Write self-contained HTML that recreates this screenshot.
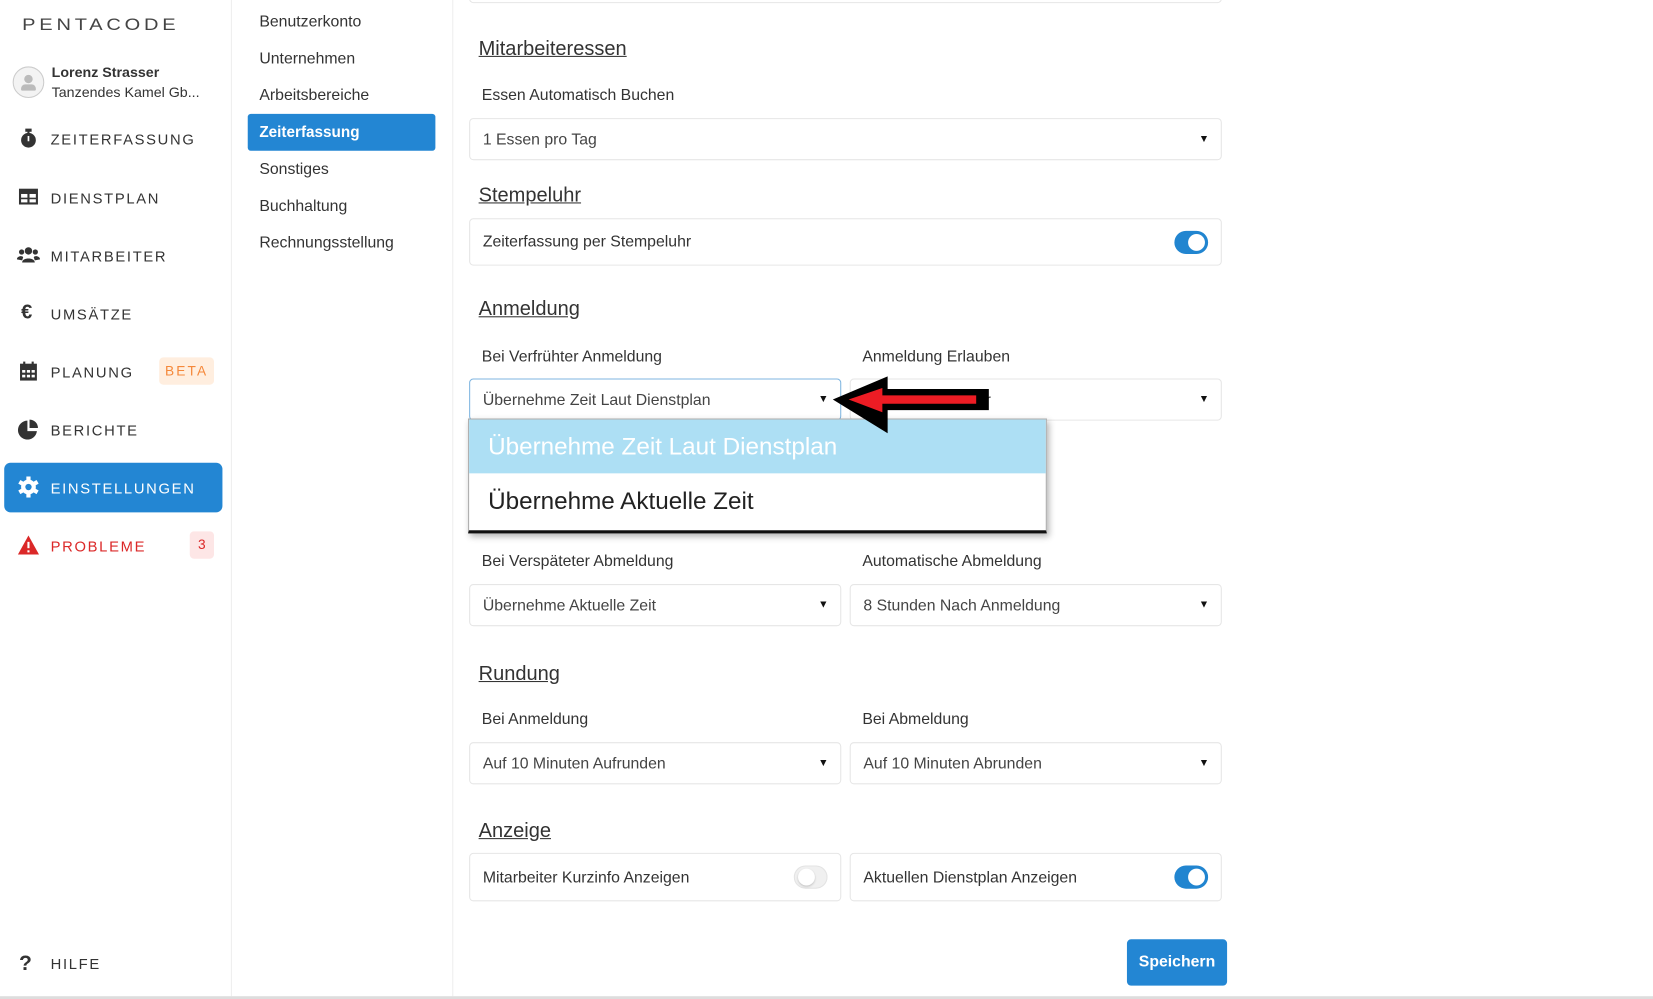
<!DOCTYPE html>
<html><head><meta charset="utf-8"><style>
*{box-sizing:border-box;margin:0;padding:0}
html,body{width:1653px;height:999px;overflow:hidden;background:#fff}
#w{position:absolute;left:0;top:0;width:1568px;height:948px;transform:scale(1.0542);transform-origin:0 0;font-family:"Liberation Sans",sans-serif;color:#333}
.a{position:absolute}
.nav{position:absolute;left:48px;font-size:14px;letter-spacing:1.6px;color:#333;line-height:20px;top:1px}
.ic{position:absolute;left:16px;width:22px;height:20px}
.sub{position:absolute;left:246px;font-size:15px;color:#333;line-height:20px}
.h{position:absolute;left:454px;font-size:19px;text-decoration:underline;color:#333;line-height:24px}
.lb{position:absolute;font-size:15px;color:#333;line-height:20px}
.box{position:absolute;border:1px solid #e6e6e6;border-radius:4px;background:#fff;font-size:15px;color:#444;padding-left:12px;display:flex;align-items:center}
.car{position:absolute;right:11px;top:50%;transform:translateY(-50%);font-size:10px;color:#111}
.tg{position:absolute;width:32px;height:22px;border-radius:11px;background:#2185d0;right:12px;top:50%;transform:translateY(-50%)}
.tg:after{content:"";position:absolute;right:3px;top:3px;width:16px;height:16px;border-radius:50%;background:#fff}
.tg.off{background:#f0f0f0;border:1px solid #e3e3e3}
.tg.off:after{left:3px;right:auto;top:2px;box-shadow:0 1px 2px rgba(0,0,0,.2)}
</style></head><body><div id="w">
<div class="a" style="left:219px;top:0;width:1px;height:945px;background:#eee"></div>
<div class="a" style="left:429px;top:0;width:1px;height:945px;background:#eee"></div>
<div class="a" style="left:0;top:945px;width:1568px;height:3px;background:#ddd"></div>

<div class="a" style="left:21px;top:13px;font-size:19px;letter-spacing:3.6px;color:#444;line-height:22px;transform:scaleY(0.85);transform-origin:0 50%">PENTACODE</div>

<div class="a" style="left:12px;top:63px;width:30px;height:30px;border-radius:50%;border:1px solid #ccc;background:#f3f3f3"><div class="a" style="left:10px;top:7px;width:8px;height:8px;border-radius:50%;background:#bbb"></div><div class="a" style="left:7px;top:16px;width:14px;height:6px;border-radius:4px 4px 1px 1px;background:#bbb"></div></div>
<div class="a" style="left:49px;top:61px;font-size:13.5px;font-weight:bold;color:#333">Lorenz Strasser</div>
<div class="a" style="left:49px;top:80px;font-size:13.5px;color:#333">Tanzendes Kamel Gb...</div>

<svg class="ic" style="top:121px" viewBox="0 0 22 20"><circle cx="11" cy="12" r="7" fill="#333"/><rect x="8" y="1" width="6" height="3" fill="#333"/><rect x="10" y="3" width="2" height="3" fill="#333"/><rect x="10.2" y="8" width="1.6" height="5" fill="#fff"/></svg>
<div class="nav" style="top:122px">ZEITERFASSUNG</div>
<svg class="ic" style="top:177px" viewBox="0 0 22 20"><rect x="2" y="2" width="18" height="15" fill="#333"/><rect x="4" y="7" width="6" height="3.5" fill="#fff"/><rect x="12" y="7" width="6" height="3.5" fill="#fff"/><rect x="4" y="12" width="6" height="3" fill="#fff"/><rect x="12" y="12" width="6" height="3" fill="#fff"/></svg>
<div class="nav" style="top:178px">DIENSTPLAN</div>
<svg class="ic" style="top:232px" viewBox="0 0 22 20"><circle cx="11" cy="6" r="3.5" fill="#333"/><circle cx="4.5" cy="7" r="2.5" fill="#333"/><circle cx="17.5" cy="7" r="2.5" fill="#333"/><path d="M5 17c0-5 12-5 12 0z M0 14c0-3 5-4 6-2l-1 3z M22 14c0-3-5-4-6-2l1 3z" fill="#333"/></svg>
<div class="nav" style="top:233px">MITARBEITER</div>
<div class="a" style="left:20px;top:286px;font-size:19px;font-weight:bold;color:#333">€</div>
<div class="nav" style="top:288px">UMSÄTZE</div>
<svg class="ic" style="top:342px" viewBox="0 0 22 20"><rect x="3" y="3" width="16" height="16" fill="#333"/><rect x="6" y="1" width="2" height="4" fill="#333"/><rect x="14" y="1" width="2" height="4" fill="#333"/><g fill="#fff"><rect x="5" y="9" width="3" height="2.5"/><rect x="9.5" y="9" width="3" height="2.5"/><rect x="14" y="9" width="3" height="2.5"/><rect x="5" y="13.5" width="3" height="2.5"/><rect x="9.5" y="13.5" width="3" height="2.5"/><rect x="14" y="13.5" width="3" height="2.5"/></g></svg>
<div class="nav" style="top:343px">PLANUNG</div>
<div class="a" style="left:151px;top:339px;width:52px;height:26px;border-radius:4px;background:#ffeedf;color:#f5883a;font-size:13px;letter-spacing:2px;text-align:center;line-height:26px">BETA</div>
<svg class="ic" style="top:397px" viewBox="0 0 22 20"><path d="M10 2a9 9 0 1 0 9 10h-9z" fill="#333"/><path d="M12 1v8h8a8 8 0 0 0-8-8z" fill="#333"/></svg>
<div class="nav" style="top:398px">BERICHTE</div>

<div class="a" style="left:4px;top:439px;width:207px;height:47px;border-radius:6px;background:#2386d3"></div>
<svg class="ic" style="top:452px" viewBox="0 0 22 20"><g fill="#fff" transform="translate(11 10)"><circle r="7"/><rect x="-2" y="-10" width="4" height="20"/><rect x="-2" y="-10" width="4" height="20" transform="rotate(60)"/><rect x="-2" y="-10" width="4" height="20" transform="rotate(120)"/></g><circle cx="11" cy="10" r="3" fill="#2386d3"/></svg>
<div class="nav" style="top:453px;color:#fff">EINSTELLUNGEN</div>

<svg class="ic" style="top:507px" viewBox="0 0 22 20"><path d="M11 1L21 19H1z" fill="#db2828"/><rect x="10" y="7" width="2" height="6" fill="#fff"/><rect x="10" y="15" width="2" height="2" fill="#fff"/></svg>
<div class="nav" style="top:508px;color:#db2828">PROBLEME</div>
<div class="a" style="left:180px;top:504px;width:23px;height:26px;border-radius:4px;background:#fde6e6;color:#db2828;font-size:13px;text-align:center;line-height:26px">3</div>

<div class="a" style="left:18px;top:903px;font-size:20px;font-weight:bold;color:#333">?</div>
<div class="nav" style="top:904px">HILFE</div>

<div class="sub" style="top:11px">Benutzerkonto</div>
<div class="sub" style="top:46px">Unternehmen</div>
<div class="sub" style="top:81px">Arbeitsbereiche</div>
<div class="a" style="left:235px;top:108px;width:178px;height:35px;border-radius:3px;background:#2386d3"></div>
<div class="sub" style="top:116px;color:#fff;font-weight:bold;font-size:14.5px">Zeiterfassung</div>
<div class="sub" style="top:151px">Sonstiges</div>
<div class="sub" style="top:186px">Buchhaltung</div>
<div class="sub" style="top:221px">Rechnungsstellung</div>

<div class="box" style="left:445px;top:-20px;width:714px;height:23px"></div>
<div class="h" style="top:35px">Mitarbeiteressen</div>
<div class="lb" style="left:457px;top:81px">Essen Automatisch Buchen</div>
<div class="box" style="left:445px;top:112px;width:714px;height:40px">1 Essen pro Tag<span class="car">▼</span></div>
<div class="h" style="top:174px">Stempeluhr</div>
<div class="box" style="left:445px;top:207px;width:714px;height:45px;color:#333">Zeiterfassung per Stempeluhr<span class="tg"></span></div>
<div class="h" style="top:282px">Anmeldung</div>
<div class="lb" style="left:457px;top:329px">Bei Verfrühter Anmeldung</div>
<div class="lb" style="left:818px;top:329px">Anmeldung Erlauben</div>
<div class="box" style="left:445px;top:359px;width:353px;height:40px;border-color:#7fb5e0">Übernehme Zeit Laut Dienstplan<span class="car">▼</span></div>
<div class="box" style="left:806px;top:359px;width:353px;height:40px"><span style="position:absolute;left:128px">r</span><span class="car">▼</span></div>

<div class="lb" style="left:457px;top:523px">Bei Verspäteter Abmeldung</div>
<div class="lb" style="left:818px;top:523px">Automatische Abmeldung</div>
<div class="box" style="left:445px;top:554px;width:353px;height:40px">Übernehme Aktuelle Zeit<span class="car">▼</span></div>
<div class="box" style="left:806px;top:554px;width:353px;height:40px">8 Stunden Nach Anmeldung<span class="car">▼</span></div>
<div class="h" style="top:628px">Rundung</div>
<div class="lb" style="left:457px;top:673px">Bei Anmeldung</div>
<div class="lb" style="left:818px;top:673px">Bei Abmeldung</div>
<div class="box" style="left:445px;top:704px;width:353px;height:40px">Auf 10 Minuten Aufrunden<span class="car">▼</span></div>
<div class="box" style="left:806px;top:704px;width:353px;height:40px">Auf 10 Minuten Abrunden<span class="car">▼</span></div>
<div class="h" style="top:777px">Anzeige</div>
<div class="box" style="left:445px;top:809px;width:353px;height:46px;color:#333">Mitarbeiter Kurzinfo Anzeigen<span class="tg off" style="right:12px"></span></div>
<div class="box" style="left:806px;top:809px;width:353px;height:46px;color:#333">Aktuellen Dienstplan Anzeigen<span class="tg"></span></div>
<div class="a" style="left:1069px;top:891px;width:95px;height:44px;border-radius:4px;background:#2386d3;color:#fff;font-size:15px;font-weight:bold;text-align:center;line-height:44px">Speichern</div>

<div class="a" style="left:444px;top:397px;width:549px;height:109px;background:#fff;border:1px solid #aaa;border-bottom:3px solid #111;box-shadow:2px 3px 6px rgba(0,0,0,.3)">
<div class="a" style="left:0;top:0;width:547px;height:51px;background:#addff4;color:#fff;font-size:23px;padding-left:18px;line-height:51px">Übernehme Zeit Laut Dienstplan</div>
<div class="a" style="left:18px;top:64px;font-size:23px;color:#222">Übernehme Aktuelle Zeit</div>
</div>

<svg class="a" style="left:785px;top:355px" width="158" height="58" viewBox="0 0 158 58"><path d="M5 24L57 2V14H153V34H57V56z" fill="#000"/><path d="M20 24L52 13V20H141V28H52V36z" fill="#ed1c24"/></svg>
</div></body></html>
